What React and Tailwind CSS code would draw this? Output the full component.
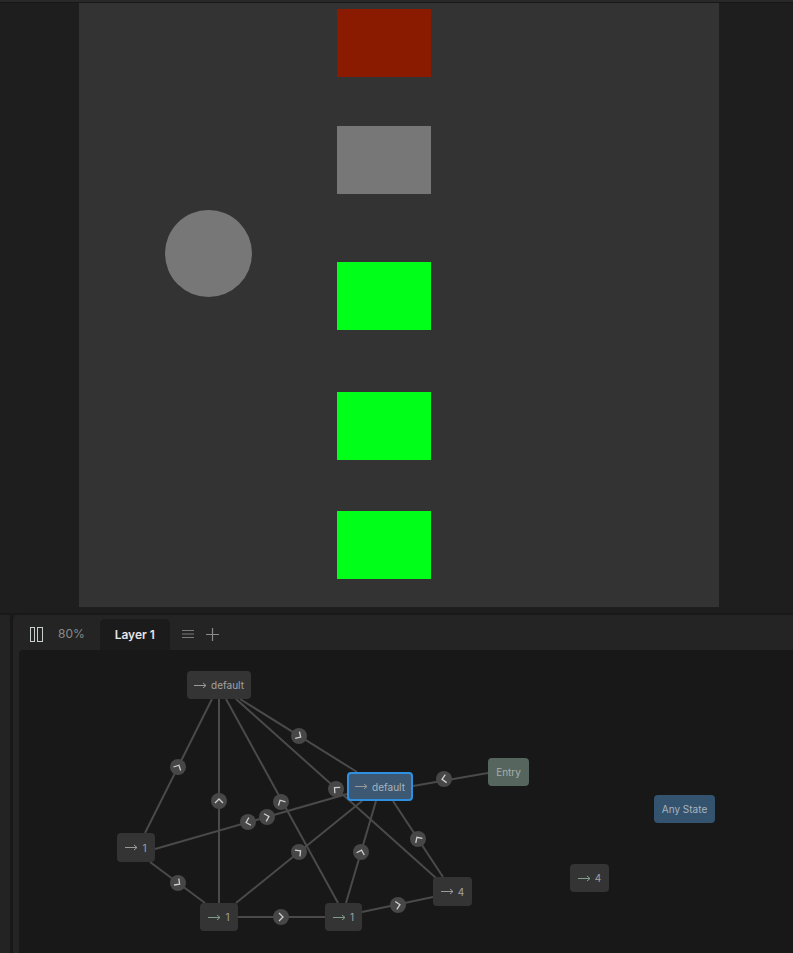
import React from 'react'

// scene objects on the preview canvas (canvas-local px)
const SHAPES = [
  { kind: 'rect', x: 258, y: 6, w: 94, h: 68, color: '#8a1a00' },
  { kind: 'rect', x: 258, y: 123, w: 94, h: 68, color: '#777777' },
  { kind: 'circle', x: 86, y: 207, w: 87, h: 87, color: '#777777' },
  { kind: 'rect', x: 258, y: 259, w: 94, h: 68, color: '#00ff19' },
  { kind: 'rect', x: 258, y: 389, w: 94, h: 68, color: '#00ff19' },
  { kind: 'rect', x: 258, y: 508, w: 94, h: 68, color: '#00ff19' },
]

// graph origin in page coords
const OX = 19
const OY = 650

const NODES = [
  { id: 'top', label: 'default', x: 187, y: 671, w: 64, h: 28, arrow: true },
  { id: 'sel', label: 'default', x: 347, y: 772, w: 66, h: 29, arrow: true, selected: true },
  { id: 'entry', label: 'Entry', x: 488, y: 758, w: 41, h: 28, tone: 'entry' },
  { id: 'any', label: 'Any State', x: 654, y: 795, w: 61, h: 28, tone: 'any' },
  { id: 'l1', label: '1', x: 117, y: 833, w: 38, h: 29, arrow: true },
  { id: 'b1', label: '1', x: 200, y: 903, w: 38, h: 28, arrow: true, green: true },
  { id: 'm1', label: '1', x: 325, y: 903, w: 37, h: 28, arrow: true, green: true },
  { id: 'f4', label: '4', x: 433, y: 877, w: 39, h: 29, arrow: true },
  { id: 'r4', label: '4', x: 570, y: 864, w: 39, h: 28, arrow: true, green: true },
]

// a, b: line ends; marks: [cx, cy, dir] where dir 1 points a→b, -1 points b→a
const EDGES = [
  { a: [212, 699], b: [145, 833], marks: [[178, 767, -1]] },
  { a: [219, 699], b: [219, 903], marks: [[219, 801, -1]] },
  { a: [226, 699], b: [338, 903], marks: [[281, 802, -1]] },
  { a: [236, 699], b: [436, 878], marks: [[336, 789, -1]] },
  { a: [240, 699], b: [357, 772], marks: [[299, 736, 1]] },
  { a: [155, 849], b: [347, 794], marks: [[248, 822, -1], [267, 817, 1]] },
  { a: [362, 801], b: [236, 903], marks: [[299, 852, -1]] },
  { a: [376, 801], b: [346, 903], marks: [[361, 852, -1]] },
  { a: [393, 801], b: [443, 877], marks: [[418, 839, -1]] },
  { a: [488, 773], b: [413, 786], marks: [[444, 779, 1]] },
  { a: [150, 862], b: [205, 903], marks: [[178, 883, 1]] },
  { a: [238, 917], b: [325, 917], marks: [[281, 917, 1]] },
  { a: [362, 912], b: [433, 897], marks: [[398, 905, 1]] },
]

function Arrow({ green }) {
  const c = green ? '#7f9d8b' : '#9a9a9a'
  return (
    <svg width="13" height="7" viewBox="0 0 13 7" className="shrink-0">
      <path d="M0 3.5 H12 M9 1 L12 3.5 L9 6" stroke={c} strokeWidth="1" fill="none" />
    </svg>
  )
}

function Node({ n }) {
  let cls = 'bg-[#343434] text-[#a3a3a3]'
  if (n.selected) cls = 'bg-[#3c5872] text-[#a9b3bc] border-2 border-[#2f90e0]'
  if (n.tone === 'entry') cls = 'bg-[#56665e] text-[#a6aeaa]'
  if (n.tone === 'any') cls = 'bg-[#33536f] text-[#aab4be]'
  return (
    <div
      className={`absolute flex items-center justify-center gap-[4px] rounded-[4px] text-[10px] leading-none ${cls}`}
      style={{ left: n.x - OX, top: n.y - OY, width: n.w, height: n.h }}
    >
      {n.arrow && <Arrow green={n.green} />}
      <span>{n.label}</span>
    </div>
  )
}

function Edges() {
  return (
    <svg className="absolute inset-0 w-full h-full pointer-events-none">
      <g transform={`translate(${-OX} ${-OY})`}>
        {EDGES.map((e, i) => (
          <line key={i} x1={e.a[0]} y1={e.a[1]} x2={e.b[0]} y2={e.b[1]} stroke="#4a4a4a" strokeWidth="2" />
        ))}
        {EDGES.map((e, i) =>
          e.marks.map(([cx, cy, dir], j) => {
            const dx = (e.b[0] - e.a[0]) * dir
            const dy = (e.b[1] - e.a[1]) * dir
            const ang = (Math.atan2(dy, dx) * 180) / Math.PI
            return (
              <g key={`${i}-${j}`} transform={`translate(${cx} ${cy})`}>
                <circle r="8" fill="#474747" />
                <polyline
                  points="-2,-4 2,0 -2,4"
                  transform={`rotate(${ang})`}
                  stroke="#cfcfcf"
                  strokeWidth="1.3"
                  fill="none"
                />
              </g>
            )
          })
        )}
      </g>
    </svg>
  )
}

export default function App() {
  return (
    <div
      className="w-[793px] h-[953px] bg-[#1e1e1e] flex flex-col overflow-hidden"
      style={{ fontFamily: 'Inter, "Liberation Sans", sans-serif' }}
    >
      <div className="h-[2px] bg-[#292929]" />
      <div className="h-px bg-[#181818]" />

      {/* scene preview */}
      <div className="flex">
        <div className="ml-[79px] w-[640px] h-[604px] bg-[#333333] relative">
          {SHAPES.map((s, i) => (
            <div
              key={i}
              className={`absolute ${s.kind === 'circle' ? 'rounded-full' : ''}`}
              style={{ left: s.x, top: s.y, width: s.w, height: s.h, background: s.color }}
            />
          ))}
        </div>
      </div>

      <div className="h-[6px]" />
      <div className="h-[2px] bg-[#191919]" />

      {/* animator panel */}
      <div className="flex-1 flex">
        <div className="w-[10px] bg-[#232323]" />
        <div className="w-[3px] bg-[#181818]" />
        <div className="flex-1 flex flex-col bg-[#242424] rounded-tl-[6px]">
          <div className="h-[35px] flex items-end pl-[17px]">
            <div className="h-full pt-[3px] flex items-center">
              <span className="block w-[5px] h-[15px] border-[1.5px] border-[#c9d0cc]" />
              <span className="block w-[6px] h-[15px] border-[1.5px] border-[#c9d0cc] ml-[2px]" />
            </div>
            <div className="h-full pt-[3px] flex items-center ml-[15px] text-[12px] text-[#8a8a8a]">80%</div>
            <div className="ml-[15px] w-[70px] h-[31px] bg-[#1b1b1b] rounded-t-[5px] flex items-center justify-center text-[12px] font-semibold text-[#e6e6e6]">
              Layer 1
            </div>
            <div className="h-full pt-[3px] flex items-center ml-[12px]">
              <svg width="12" height="12" viewBox="0 0 12 12">
                <path d="M0 2.5 H12 M0 6 H12 M0 9.5 H12" stroke="#7a7a7a" strokeWidth="1" />
              </svg>
            </div>
            <div className="h-full pt-[3px] flex items-center ml-[12px]">
              <svg width="13" height="13" viewBox="0 0 13 13">
                <path d="M6.5 0 V13 M0 6.5 H13" stroke="#8a8a8a" strokeWidth="1.2" />
              </svg>
            </div>
          </div>

          <div className="flex-1 ml-[6px] bg-[#181818] rounded-tl-[4px] relative overflow-hidden bg-[radial-gradient(#202020_0.6px,transparent_0.7px)] bg-[length:4px_4px]">
            <Edges />
            {NODES.map((n) => (
              <Node key={n.id} n={n} />
            ))}
          </div>
        </div>
      </div>
    </div>
  )
}
